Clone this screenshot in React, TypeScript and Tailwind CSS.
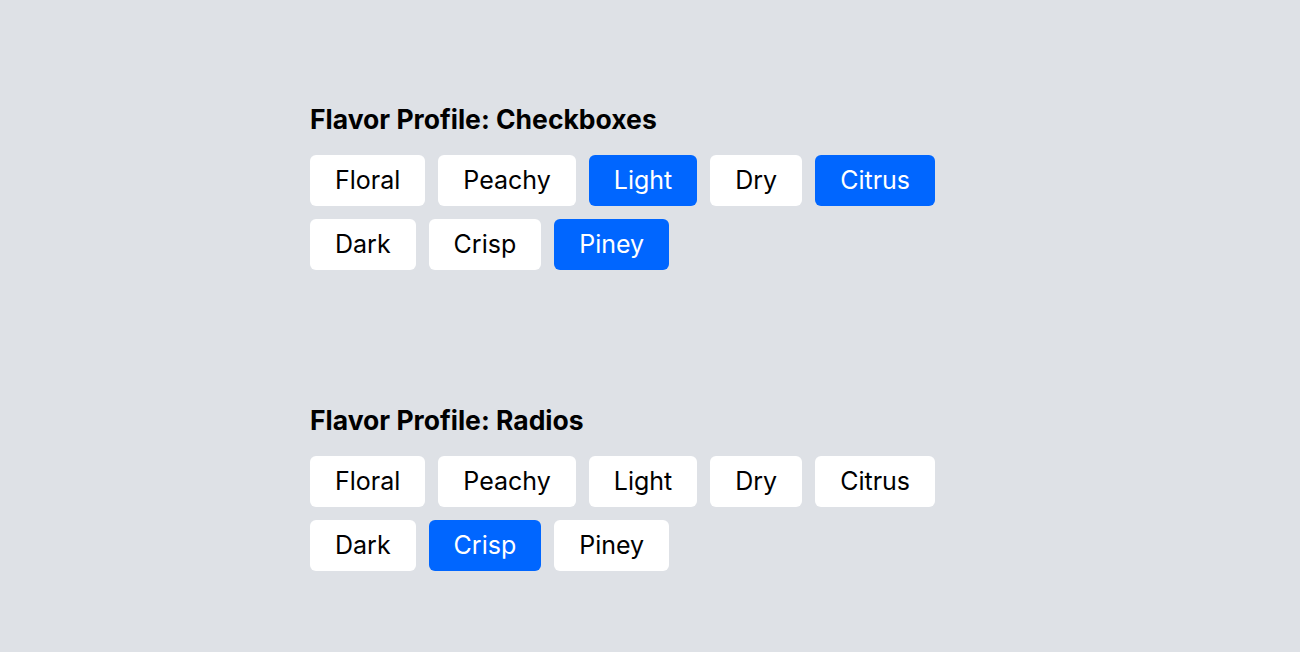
import { useState } from "react";

const flavors = ["Floral", "Peachy", "Light", "Dry", "Citrus", "Dark", "Crisp", "Piney"];

function Chip({ label, on, onClick }: { label: string; on: boolean; onClick: () => void }) {
  return (
    <button
      onClick={onClick}
      className={`px-[25px] py-3 rounded-md text-[25px] leading-[27px] ${
        on ? "bg-[#0066ff] text-white" : "bg-white text-black"
      }`}
    >
      {label}
    </button>
  );
}

export default function App() {
  const [checked, setChecked] = useState<string[]>(["Light", "Citrus", "Piney"]);
  const [picked, setPicked] = useState("Crisp");

  const toggle = (f: string) =>
    setChecked((c) => (c.includes(f) ? c.filter((x) => x !== f) : [...c, f]));

  return (
    <div className="min-h-screen bg-[#dee1e6] font-['Inter',sans-serif] text-black">
      <div className="w-[680px] mx-auto pt-[103px] flex flex-col gap-[134px]">
        <section>
          <h2 className="text-[26.5px] leading-[32px] font-bold mb-[20px]">Flavor Profile: Checkboxes</h2>
          <div className="flex flex-wrap gap-[13px]">
            {flavors.map((f) => (
              <Chip key={f} label={f} on={checked.includes(f)} onClick={() => toggle(f)} />
            ))}
          </div>
        </section>
        <section>
          <h2 className="text-[26.5px] leading-[32px] font-bold mb-[20px]">Flavor Profile: Radios</h2>
          <div className="flex flex-wrap gap-[13px]">
            {flavors.map((f) => (
              <Chip key={f} label={f} on={picked === f} onClick={() => setPicked(f)} />
            ))}
          </div>
        </section>
      </div>
    </div>
  );
}
